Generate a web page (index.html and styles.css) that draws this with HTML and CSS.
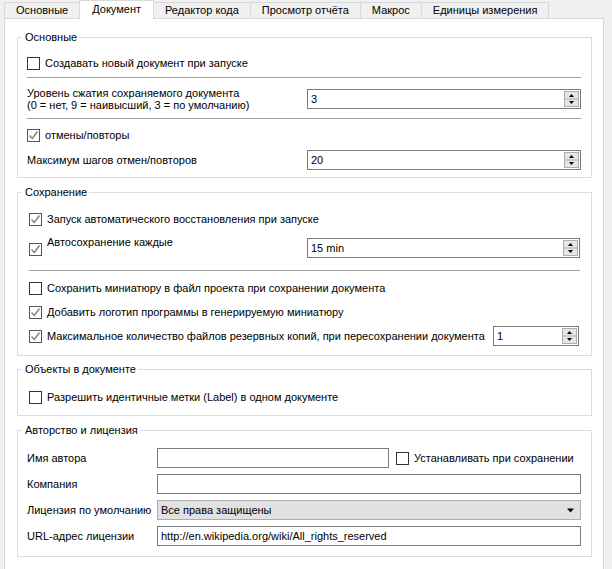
FILE: index.html
```html
<!DOCTYPE html>
<html lang="ru">
<head>
<meta charset="utf-8">
<title>Документ</title>
<link rel="stylesheet" href="styles.css">
</head>
<body>
<div class="tabs">
  <div class="tab">Основные</div>
  <div class="tab active">Документ</div>
  <div class="tab">Редактор кода</div>
  <div class="tab">Просмотр отчёта</div>
  <div class="tab">Макрос</div>
  <div class="tab">Единицы измерения</div>
</div>
<div class="panel">
  <fieldset class="group">
    <legend>Основные</legend>
    <div class="body g1">
      <div class="chkrow"><span class="cb"></span><span>Создавать новый документ при запуске</span></div>
      <div class="sep s1a"></div>
      <div class="field tall">
        <div class="lbl2">Уровень сжатия сохраняемого документа<br>(0 = нет, 9 = наивысший, 3 = по умолчанию)</div>
        <div class="spin w274"><span class="val">3</span><svg class="spinbtn" width="15" height="16" viewBox="0 0 15 16"><rect x="0.5" y="0.5" width="14" height="15" fill="#e5e5e5" stroke="#adadad"/><line x1="1" y1="8" x2="14" y2="8" stroke="#adadad"/><path d="M5 6h5l-2.5-3z" fill="#000"/><path d="M5 10h5l-2.5 3z" fill="#000"/></svg></div>
      </div>
      <div class="sep s1b"></div>
      <div class="chkrow"><span class="cb on"><svg width="11" height="11" viewBox="0 0 11 11"><path d="M1.5 5.5l2.8 3 5.2-7" fill="none" stroke="#7a7a7a" stroke-width="1.3"/></svg></span><span>отмены/повторы</span></div>
      <div class="field mt5">
        <div>Максимум шагов отмен/повторов</div>
        <div class="spin w274"><span class="val">20</span><svg class="spinbtn" width="15" height="16" viewBox="0 0 15 16"><rect x="0.5" y="0.5" width="14" height="15" fill="#e5e5e5" stroke="#adadad"/><line x1="1" y1="8" x2="14" y2="8" stroke="#adadad"/><path d="M5 6h5l-2.5-3z" fill="#000"/><path d="M5 10h5l-2.5 3z" fill="#000"/></svg></div>
      </div>
    </div>
  </fieldset>

  <fieldset class="group mt7">
    <legend>Сохранение</legend>
    <div class="body g2">
      <div class="chkrow"><span class="cb on"><svg width="11" height="11" viewBox="0 0 11 11"><path d="M1.5 5.5l2.8 3 5.2-7" fill="none" stroke="#7a7a7a" stroke-width="1.3"/></svg></span><span>Запуск автоматического восстановления при запуске</span></div>
      <div class="field autosave">
        <div class="chkwrap"><span class="cb on"><svg width="11" height="11" viewBox="0 0 11 11"><path d="M1.5 5.5l2.8 3 5.2-7" fill="none" stroke="#7a7a7a" stroke-width="1.3"/></svg></span><span class="txt">Автосохранение каждые</span></div>
        <div class="spin w273"><span class="val">15 min</span><svg class="spinbtn" width="15" height="16" viewBox="0 0 15 16"><rect x="0.5" y="0.5" width="14" height="15" fill="#e5e5e5" stroke="#adadad"/><line x1="1" y1="8" x2="14" y2="8" stroke="#adadad"/><path d="M5 6h5l-2.5-3z" fill="#000"/><path d="M5 10h5l-2.5 3z" fill="#000"/></svg></div>
      </div>
      <div class="sep s2"></div>
      <div class="chkrow"><span class="cb"></span><span>Сохранить миниатюру в файл проекта при сохранении документа</span></div>
      <div class="chkrow mt4"><span class="cb on"><svg width="11" height="11" viewBox="0 0 11 11"><path d="M1.5 5.5l2.8 3 5.2-7" fill="none" stroke="#7a7a7a" stroke-width="1.3"/></svg></span><span>Добавить логотип программы в генерируемую миниатюру</span></div>
      <div class="chkrow mt4"><span class="cb on"><svg width="11" height="11" viewBox="0 0 11 11"><path d="M1.5 5.5l2.8 3 5.2-7" fill="none" stroke="#7a7a7a" stroke-width="1.3"/></svg></span><span>Максимальное количество файлов резервных копий, при пересохранении документа</span>
        <div class="spin w86"><span class="val">1</span><svg class="spinbtn" width="15" height="16" viewBox="0 0 15 16"><rect x="0.5" y="0.5" width="14" height="15" fill="#e5e5e5" stroke="#adadad"/><line x1="1" y1="8" x2="14" y2="8" stroke="#adadad"/><path d="M5 6h5l-2.5-3z" fill="#000"/><path d="M5 10h5l-2.5 3z" fill="#000"/></svg></div>
      </div>
    </div>
  </fieldset>

  <fieldset class="group mt6">
    <legend>Объекты в документе</legend>
    <div class="body g3">
      <div class="chkrow"><span class="cb"></span><span>Разрешить идентичные метки (Label) в одном документе</span></div>
    </div>
  </fieldset>

  <fieldset class="group mt7">
    <legend>Авторство и лицензия</legend>
    <div class="body g4">
      <div class="lbl">Имя автора</div>
      <div class="rowflex">
        <div class="input short"></div>
        <div class="chkrow inline"><span class="cb"></span><span>Устанавливать при сохранении</span></div>
      </div>
      <div class="lbl">Компания</div>
      <div class="input"></div>
      <div class="lbl">Лицензия по умолчанию</div>
      <div class="combo"><span class="val">Все права защищены</span><svg width="9" height="5" viewBox="0 0 9 5"><path d="M1 0.5h7l-3.5 4z" fill="#000"/></svg></div>
      <div class="lbl">URL-адрес лицензии</div>
      <div class="input"><span class="val">http://en.wikipedia.org/wiki/All_rights_reserved</span></div>
    </div>
  </fieldset>
</div>
</body>
</html>
```
FILE: styles.css
```css
* { box-sizing: border-box; }
html, body { margin: 0; padding: 0; }
body {
  background: #f0f0f0;
  font-family: "Liberation Sans", Arial, sans-serif;
  font-size: 11px;
  color: #000;
  width: 612px;
  height: 569px;
  overflow: hidden;
}

/* tabs */
.tabs { display: flex; align-items: flex-end; height: 18px; padding-left: 4px; }
.tab {
  height: 16px;
  line-height: 15px;
  padding: 0 11px;
  border: 1px solid #d9d9d9;
  border-bottom: 0;
  margin-right: -1px;
  background: #f0f0f0;
  white-space: nowrap;
}
.tab.active {
  height: 19px;
  line-height: 16px;
  padding: 0 12px;
  background: #fff;
  margin-bottom: -1px;
  position: relative;
  z-index: 1;
}

/* panel */
.panel {
  margin-left: 4px;
  width: 600px;
  height: 560px;
  background: #fff;
  border: 1px solid #d9d9d9;
  padding: 11px 11px 0 12px;
}

.group { margin: 0; padding: 0; border: 1px solid #dcdcdc; min-width: 0; }
.group legend { padding: 0 2px 0 4px; margin-left: 3px; line-height: 15px; height: 15px; }
.mt7 { margin-top: 7px; }
.mt6 { margin-top: 6px; }
.mt5 { margin-top: 5px; }
.mt4 { margin-top: 4px; }

.body.g1 { padding: 8px 10px 7px 9px; }
.body.g2 { padding: 9px 11px 9px 11px; }
.body.g3 { padding: 10px 11px 8px 11px; }
.body.g4 {
  padding: 10px 10px 10px 9px;
  display: grid;
  grid-template-columns: 130px 1fr;
  grid-auto-rows: 20px;
  row-gap: 6px;
  align-items: center;
}

.chkrow { display: flex; align-items: center; height: 20px; gap: 5px; white-space: nowrap; }
.cb {
  width: 13px; height: 13px;
  border: 1px solid #333;
  background: #fff;
  flex: none;
  display: flex; align-items: center; justify-content: center;
}
.cb.on { border-color: #555; }

.sep { height: 1px; background: #a0a0a0; }
.s1a { margin: 4px 0 10px; }
.s1b { margin: 8px 0 6px; }
.s2 { margin: 12px 0 7px; }

.field { display: flex; align-items: center; justify-content: space-between; height: 20px; }
.field.tall { height: 22px; }
.lbl2 { line-height: 12px; }

.spin {
  height: 20px;
  border: 1px solid #7a7a7a;
  background: #fff;
  display: flex; align-items: center;
  padding-left: 3px;
  flex: none;
}
.spin .val { flex: 1; }
.spinbtn { margin-right: 1px; }
.w274 { width: 274px; }
.w273 { width: 273px; }
.w86 { width: 86px; margin-left: auto; margin-right: 1px; }

.autosave { margin-top: 9px; }
.autosave .chkwrap { align-self: stretch; display: flex; align-items: flex-start; gap: 5px; }
.autosave .cb { margin-top: 5px; }
.autosave .txt { line-height: 14px; margin-top: -3px; }

.lbl { white-space: nowrap; }
.rowflex { display: flex; align-items: center; gap: 7px; height: 20px; }
.input {
  height: 20px;
  border: 1px solid #7a7a7a;
  background: #fff;
  padding-left: 3px;
  display: flex; align-items: center;
}
.input.short { width: 232px; flex: none; }
.combo {
  height: 20px;
  border: 1px solid #adadad;
  background: #e1e1e1;
  padding: 0 5px 0 3px;
  display: flex; align-items: center; justify-content: space-between;
}
```
